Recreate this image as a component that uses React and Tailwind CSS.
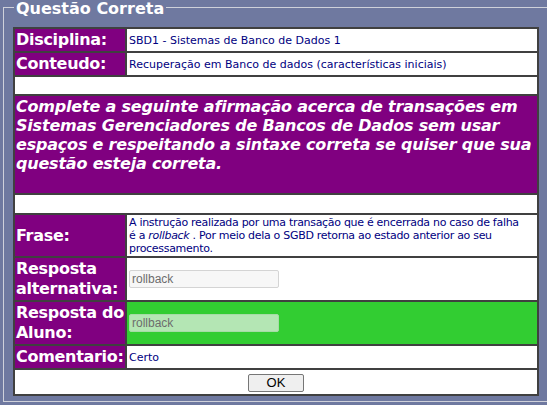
import React from "react";

const labelCell =
  "bg-[#800080] text-white font-bold text-[16px] leading-[20px] tracking-[-0.3px] px-[1px] py-[1px] border border-[#404040] text-left align-middle";
const valueCell =
  "text-[#000080] text-[11px] leading-[13px] px-[2px] py-[1px] border border-[#404040] align-middle whitespace-nowrap";

const Row = ({ label, children, green }) => (
  <tr>
    <th className={labelCell}>{label}</th>
    <td className={`${valueCell} ${green ? "bg-[#32cd32]" : "bg-white"}`}>{children}</td>
  </tr>
);

const App = () => {
  return (
    <div className="w-[547px] h-[405px] overflow-hidden bg-[#6f79a0] font-['DejaVu_Sans',sans-serif]">
      <fieldset className="w-[600px] ml-[3px] -mt-[3px] border border-[#cfd1da] pl-[9px] pr-0 pb-[5px]">
        <legend className="ml-[1px] px-[2px] pt-[4px] text-white font-bold text-[16px] leading-[16px]">
          Questão Correta
        </legend>
        <table className="w-[526px] table-fixed border-separate border-spacing-0 border border-[#404040] mt-[10px]">
          <colgroup>
            <col className="w-[112px]" />
            <col />
          </colgroup>
          <tbody>
            <Row label="Disciplina:">SBD1 - Sistemas de Banco de Dados 1</Row>
            <Row label="Conteudo:">Recuperação em Banco de dados (características iniciais)</Row>
            <tr>
              <td colSpan={2} className="h-[19px] bg-white border border-[#404040]"></td>
            </tr>
            <tr>
              <td
                colSpan={2}
                className="bg-[#800080] text-white font-bold italic text-[16px] leading-[19px] tracking-[-0.2px] px-[1px] py-[1px] border border-[#404040] whitespace-nowrap"
              >
                Complete a seguinte afirmação acerca de transações em
                <br />
                Sistemas Gerenciadores de Bancos de Dados sem usar
                <br />
                espaços e respeitando a sintaxe correta se quiser que sua
                <br />
                questão esteja correta.
                <br />
                &nbsp;
              </td>
            </tr>
            <tr>
              <td colSpan={2} className="h-[20px] bg-white border border-[#404040]"></td>
            </tr>
            <Row label="Frase:">
              <div className="tracking-[-0.3px]">
                A instrução realizada por uma transação que é encerrada no caso de falha
                <br />é a <i>rollback</i> . Por meio dela o SGBD retorna ao estado anterior ao seu
                <br />
                processamento.
              </div>
            </Row>
            <Row label={<>Resposta<br />alternativa:</>}>
              <input
                disabled
                value="rollback"
                readOnly
                className="w-[150px] h-[18px] px-[2px] border border-[#d4d4d4] rounded-[2px] bg-[#f7f7f7] text-[#6d6d6d] text-[12px] font-['Liberation_Sans',sans-serif] align-middle"
              />
            </Row>
            <Row label={<>Resposta do<br />Aluno:</>} green>
              <input
                disabled
                value="rollback"
                readOnly
                className="w-[150px] h-[18px] px-[2px] border border-[#a6dca6] rounded-[2px] bg-[#b4e6b4] text-[#6d6d6d] text-[12px] font-['Liberation_Sans',sans-serif] align-middle"
              />
            </Row>
            <Row label="Comentario:">Certo</Row>
            <tr>
              <td colSpan={2} className="bg-white border border-[#404040] text-center p-0 h-[22px]">
                <button className="w-[56px] h-[18px] align-middle border border-[#767676] rounded-[2px] bg-[#efefef] text-black text-[13px] leading-[16px] font-['Liberation_Sans',sans-serif]">
                  OK
                </button>
              </td>
            </tr>
          </tbody>
        </table>
      </fieldset>
    </div>
  );
};

export default App;
